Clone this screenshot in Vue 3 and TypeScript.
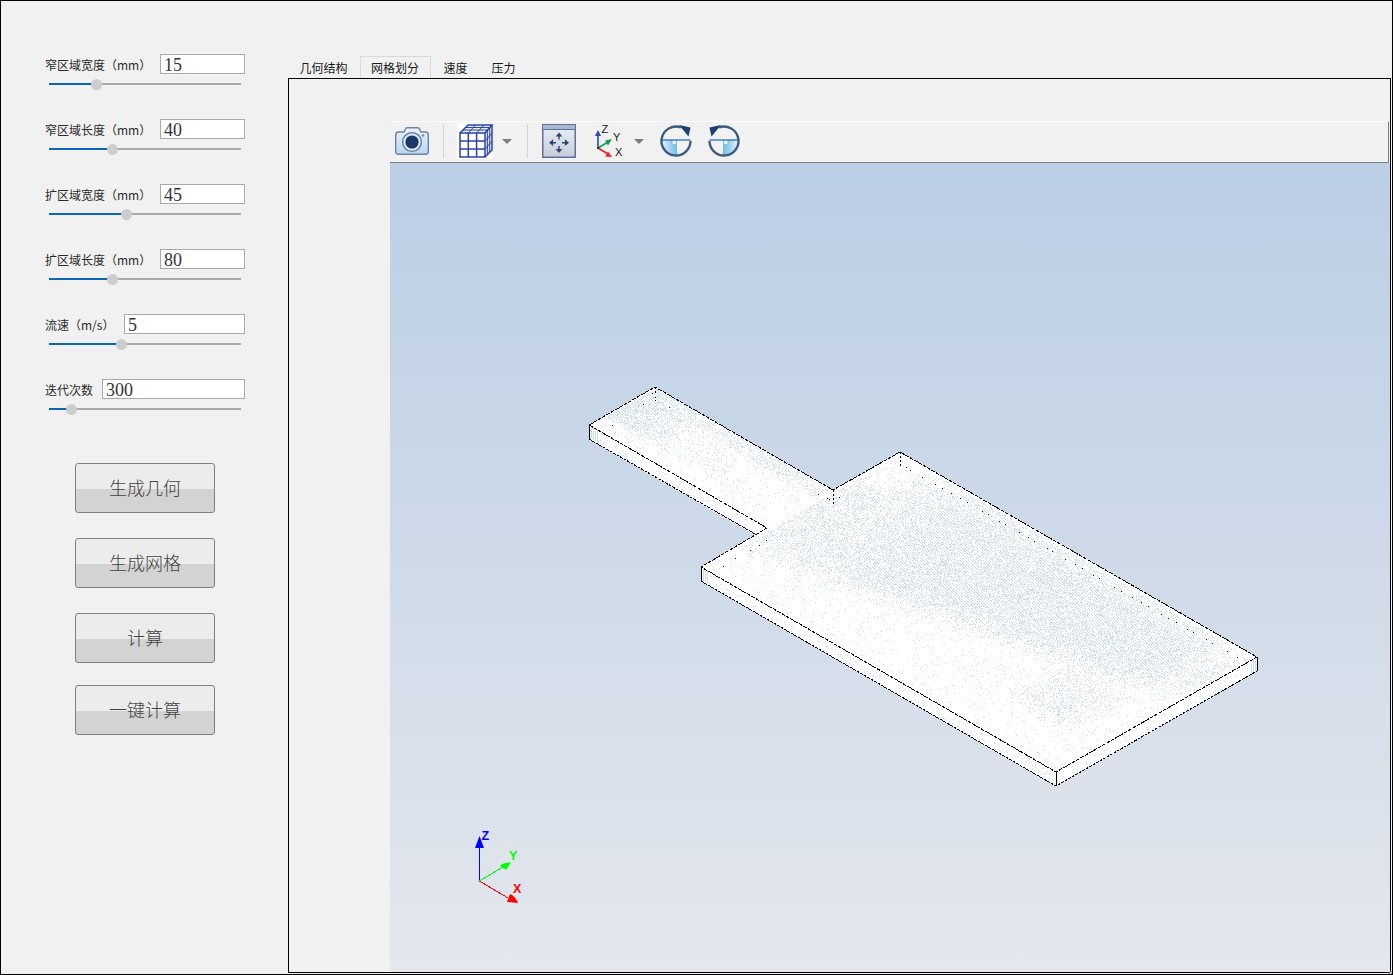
<script setup lang="ts">
interface Param {
  label: string
  value: string
  knob: number
  size: string
}

const params: Param[] = [
  { label: '窄区域宽度（mm）', value: '15', knob: 96, size: 'wide' },
  { label: '窄区域长度（mm）', value: '40', knob: 112, size: 'wide' },
  { label: '扩区域宽度（mm）', value: '45', knob: 126, size: 'wide' },
  { label: '扩区域长度（mm）', value: '80', knob: 112, size: 'wide' },
  { label: '流速（m/s）', value: '5', knob: 121, size: 'mid' },
  { label: '迭代次数', value: '300', knob: 71, size: 'short' },
]
const TRACK_START = 49
const actions = ['生成几何', '生成网格', '计算', '一键计算']
const tabs = ['几何结构', '网格划分', '速度', '压力']

function makeRandom(seed: number): () => number {
  let s = seed
  return () => {
    s = (s + 0x6d2b79f5) | 0
    let t = Math.imul(s ^ (s >>> 15), 1 | s)
    t = (t + Math.imul(t ^ (t >>> 7), 61 | t)) ^ t
    return ((t ^ (t >>> 14)) >>> 0) / 4294967296
  }
}
const rnd = makeRandom(20240607)

type P = [number, number]

function scan(
  o: P,
  a: P,
  b: P,
  density: (u: number, v: number) => number,
  out: string[],
): void {
  const det = a[0] * b[1] - b[0] * a[1]
  const xs = [o[0], o[0] + a[0], o[0] + b[0], o[0] + a[0] + b[0]]
  const ys = [o[1], o[1] + a[1], o[1] + b[1], o[1] + a[1] + b[1]]
  for (let x = Math.min(...xs); x < Math.max(...xs); x++) {
    for (let y = Math.min(...ys); y < Math.max(...ys); y++) {
      const dx = x - o[0]
      const dy = y - o[1]
      const u = (dx * b[1] - b[0] * dy) / det
      const v = (a[0] * dy - dx * a[1]) / det
      if (u <= 0.004 || u >= 0.996 || v <= 0.01 || v >= 0.99) continue
      const ju = u + (rnd() - 0.5) * 0.07
      const jv = v + (rnd() - 0.5) * 0.09
      const hatch = (x + 2 * y) % 3 === 0 ? 2.2 : 0.4
      if (rnd() < density(ju, jv) * hatch) out.push(`M${x} ${y}h1`)
    }
  }
}

function wideDensity(u: number, v: number): number {
  const edge = 0.26 + 0.44 * (u - 0.2)
  if (u < 0.1 && v > 0.78) return 0.05
  if (u > 0.76 && u < 0.9 && v > 0.22 && v <= 0.5) return 0.2
  if (v < edge) return u < 0.2 && v > 0.2 ? 0.06 : 0.025
  let d = 0.36
  if (u < 0.2) d = 0.24
  if (v > 0.92) d *= 0.65
  if (u > 0.9) d *= 0.5
  if (v < edge + 0.08) d *= 0.6
  return d
}

function narrowDensity(u: number, v: number): number {
  if (u < 0.3 && v > 0.25) return 0.4 * (1 - u / 0.4) + 0.06
  if (v > 0.78) return 0.2
  if (u > 0.3 && u < 0.62 && v > 0.25 && v < 0.7) return 0.09
  return 0.025
}

function buildStipple(): string {
  const out: string[] = []
  scan([701, 567], [355, 205], [199, -115], wideDensity, out)
  scan([589, 425], [178, 103], [66, -38], narrowDensity, out)
  scan([701, 567], [355, 205], [0, 14], () => 0.05, out)
  scan([1056, 772], [201, -115], [0, 14], () => 0.05, out)
  scan([589, 425], [166, 96], [0, 14], () => 0.05, out)
  return out.join('')
}

function buildSpecks(): string {
  const out: string[] = []
  for (let i = 0; i < 36; i++) {
    const t = (i + rnd() * 0.7) / 36
    out.push(`M${Math.round(900 + 340 * t)} ${Math.round(464 + 195 * t)}h1`)
  }
  const extra: P[] = [
    [612, 425], [643, 404], [655, 400], [652, 393], [655, 397], [669, 407],
    [818, 494], [827, 498], [829, 499], [839, 497],
    [723, 566], [735, 558], [750, 550], [759, 545], [766, 540],
  ]
  for (const [x, y] of extra) out.push(`M${x} ${y}h1`)
  return out.join('')
}

const stipple = buildStipple()
const specks = buildSpecks()
</script>

<template>
  <div class="window">
    <aside class="controls">
      <div class="params">
        <div v-for="p in params" :key="p.label" class="param">
          <div class="param-row">
            <span class="param-label" :class="p.size">{{ p.label }}</span>
            <input class="param-input" :value="p.value" readonly />
          </div>
          <div class="slider">
            <div class="slider-fill" :style="{ width: p.knob - TRACK_START + 'px' }"></div>
            <div class="slider-knob" :style="{ left: p.knob - TRACK_START + 'px' }"></div>
          </div>
        </div>
      </div>
      <div class="actions">
        <button v-for="a in actions" :key="a" class="action" type="button"><span class="action-text">{{ a }}</span></button>
      </div>
    </aside>

    <main class="workspace">
      <nav class="tabbar">
        <div
          v-for="(t, i) in tabs"
          :key="t"
          class="tab"
          :class="{ first: i === 0, active: i === 1 }"
        >{{ t }}</div>
      </nav>

      <section class="pane">
        <div class="viewer">
          <div class="toolbar">
            <!-- camera -->
            <svg class="ic-camera" width="34" height="28" viewBox="0 0 34 28">
              <defs>
                <linearGradient id="camBody" x1="0" y1="0" x2="0" y2="1">
                  <stop offset="0" stop-color="#eef4fa" />
                  <stop offset="1" stop-color="#bcd6ee" />
                </linearGradient>
              </defs>
              <path
                d="M3.5 5H9L11 1.2Q11.4 .7 12 .7H23Q23.6 .7 24 1.2L26 5H30.5Q33.3 5 33.3 8V24.5Q33.3 27.3 30.5 27.3H3.5Q.7 27.3 .7 24.5V8Q.7 5 3.5 5Z"
                fill="url(#camBody)"
                stroke="#6c84a8"
                stroke-width="1.4"
              />
              <circle cx="17" cy="15" r="9.4" fill="#dbe8f4" stroke="#5f7aa0" stroke-width="1.4" />
              <circle cx="17" cy="15" r="6.6" fill="#1d3767" />
              <circle cx="28" cy="8.5" r="1.2" fill="#6c84a8" />
            </svg>
            <span class="tool-sep sep-a"></span>
            <!-- mesh cube -->
            <svg class="ic-cube" width="36" height="36" viewBox="0 0 36 36">
              <rect width="36" height="36" fill="#fff" />
              <path d="M3 10L11 2H35L28 10Z" fill="#e6f3e0" />
              <path d="M28 10L35 2V27L28 34Z" fill="#e4e9fa" />
              <g fill="none" stroke="#2b41ad" stroke-width="1.5">
                <rect x="3" y="10" width="25" height="24" />
                <path d="M11.3 10V34M19.6 10V34M3 18H28M3 26H28" />
                <path d="M3 10L11 2H35L28 10M35 2V27L28 34" />
                <path d="M11.3 10L18.6 2M19.6 10L27 2M6 7H31M8.6 4.5H33" stroke-width="1" />
                <path d="M30.4 7.5V31.5M32.7 4.8V29M28 18L35 10M28 26L35 18" stroke-width="1" />
              </g>
            </svg>
            <svg class="ic-drop drop-a" width="10" height="5" viewBox="0 0 10 5">
              <path d="M0 0H10L5 5Z" fill="#7d7d7d" />
            </svg>
            <span class="tool-sep sep-b"></span>
            <!-- fit view -->
            <svg class="ic-fit" width="34" height="34" viewBox="0 0 34 34">
              <defs>
                <linearGradient id="fitBody" x1="0" y1="0" x2="0" y2="1">
                  <stop offset="0" stop-color="#eceff4" />
                  <stop offset="1" stop-color="#c6cdd9" />
                </linearGradient>
              </defs>
              <rect x=".75" y=".75" width="32.5" height="32.5" fill="url(#fitBody)" stroke="#5b7299" stroke-width="1.5" />
              <rect x="1" y="1" width="32" height="4" fill="#a9b8cf" />
              <path d="M1 5.5H33" stroke="#5b7299" stroke-width="1" />
              <g fill="none" stroke="#2a4778" stroke-width="1.4">
                <path d="M17 11.5V15.5M17 22V26M10 18.7H14M20 18.7H24" />
              </g>
              <g fill="#2a4778">
                <path d="M17 8.5L20.4 12.6H13.6Z" />
                <path d="M17 29L20.4 24.9H13.6Z" />
                <path d="M7 18.7L11.1 15.3V22.1Z" />
                <path d="M27 18.7L22.9 15.3V22.1Z" />
              </g>
            </svg>
            <!-- axes -->
            <svg class="ic-axes" width="30" height="36" viewBox="0 0 30 36">
              <path d="M3 25V11" stroke="#2a4bb0" stroke-width="1.6" />
              <path d="M3 7L6 13H0Z" fill="#2a4bb0" />
              <path d="M3 25L13 19" stroke="#159a4a" stroke-width="1.6" />
              <path d="M17 16L13 22.5L10.2 17.6Z" fill="#159a4a" />
              <path d="M3 25L13 31" stroke="#e02626" stroke-width="1.6" />
              <path d="M17 34L10.2 33.4L13 28.4Z" fill="#e02626" />
              <circle cx="3" cy="25" r="1.1" fill="#222" />
              <text x="6.5" y="9.5" class="axis-mini">Z</text>
              <text x="18" y="18" class="axis-mini">Y</text>
              <text x="20" y="33" class="axis-mini">X</text>
            </svg>
            <svg class="ic-drop drop-b" width="10" height="5" viewBox="0 0 10 5">
              <path d="M0 0H10L5 5Z" fill="#7d7d7d" />
            </svg>
            <!-- rotate cw -->
            <svg class="ic-rot rot-a" width="32" height="32" viewBox="0 0 32 32">
              <defs>
                <linearGradient id="rotFill" x1="0" y1="0" x2="1" y2="0">
                  <stop offset="0" stop-color="#e6f4fb" />
                  <stop offset="1" stop-color="#6fbce8" />
                </linearGradient>
              </defs>
              <path d="M1.5 15H17V30.5A15.5 15.5 0 0 1 1.5 15Z" fill="url(#rotFill)" />
              <path d="M12 15V19.5H16.5V15" fill="#dff0fa" stroke="#7fb4d8" stroke-width=".8" />
              <path d="M1.5 15H30.5" stroke="#2a72b5" stroke-width="1.3" />
              <path d="M30.5 16A14.5 14.5 0 1 1 21 2.4" fill="none" stroke="#3c5a80" stroke-width="2.4" />
              <path d="M19 0L30.5 2.5L28.5 11.5Z" fill="#1f3f6e" />
            </svg>
            <!-- rotate ccw -->
            <svg class="ic-rot rot-b" width="32" height="32" viewBox="0 0 32 32">
              <g transform="translate(32 0) scale(-1 1)">
                <path d="M1.5 15H17V30.5A15.5 15.5 0 0 1 1.5 15Z" fill="url(#rotFill)" />
                <path d="M12 15V19.5H16.5V15" fill="#dff0fa" stroke="#7fb4d8" stroke-width=".8" />
                <path d="M1.5 15H30.5" stroke="#2a72b5" stroke-width="1.3" />
                <path d="M30.5 16A14.5 14.5 0 1 1 21 2.4" fill="none" stroke="#3c5a80" stroke-width="2.4" />
                <path d="M19 0L30.5 2.5L28.5 11.5Z" fill="#1f3f6e" />
              </g>
            </svg>
          </div>

          <div class="viewport">
            <svg class="scene" width="1000" height="809" viewBox="390 163 1000 809">
              <!-- faces -->
              <path
                d="M589 425L655 387L833 490L900 452L1257 657L1257 671L1056 786L701 581L701 567L755 535L589 439Z"
                fill="#fff"
              />
              <path :d="stipple" stroke="#cfdcea" stroke-width="1" fill="none" shape-rendering="crispEdges" transform="translate(0 .5)" />
              <path
                d="M591 427V439M593 428V440M595 429V441M597 430V442M703 568V581M705 569V582M707 570V583M1255 658V671M1253 659V672M1251 660V673"
                stroke="#cfdcea"
                stroke-width="1"
                shape-rendering="crispEdges"
              />
              <!-- wireframe -->
              <g fill="none" stroke="#000" stroke-width="1" shape-rendering="crispEdges">
                <path stroke-dasharray="4 1" d="M589 425L655 387L833 490L900 452L1257 657L1056 772L701 567L767 528L589 425" />
                <path stroke-dasharray="3 1" d="M589 439L755 534M701 581L1056 786L1257 671" />
                <path d="M589.5 425V439M701.5 567V581M1056.5 772V786M1257.5 657V671" />
                <path stroke-dasharray="2 2" d="M833.5 490V504M900.5 452V466M655.5 387V393" />
              </g>
              <path :d="specks" stroke="#000" stroke-width="1" fill="none" shape-rendering="crispEdges" transform="translate(0 .5)" />

              <!-- orientation triad -->
              <g shape-rendering="crispEdges">
                <path d="M479.5 881V846" stroke="#0000ff" stroke-width="1" />
                <path d="M479.5 881L503 867" stroke="#00ff00" stroke-width="1" />
                <path d="M479.5 881L508 898" stroke="#ff0000" stroke-width="1" />
              </g>
              <path d="M479.5 836L484 848H475Z" fill="#0000ff" />
              <path d="M511 862.5L506 870L500 866Q503 862 511 862.5Z" fill="#00ff00" />
              <path d="M518 903L507 902L510 894Q515 896 518 903Z" fill="#ff0000" />
              <text x="481.5" y="840" class="axis-big" fill="#0000ff">Z</text>
              <text x="509" y="860" class="axis-big" fill="#00ff00">Y</text>
              <text x="513" y="893" class="axis-big" fill="#ff0000">X</text>
            </svg>
          </div>
        </div>
      </section>
    </main>
  </div>
</template>

<style scoped>
.window {
  position: relative;
  box-sizing: border-box;
  width: 1393px;
  height: 975px;
  border: 1px solid #000;
  background: #f1f1f1;
  display: flex;
  overflow: hidden;
  font-family: "Noto Sans CJK SC", "Liberation Sans", sans-serif;
  color: #222;
}
.window::after {
  content: "";
  position: absolute;
  right: 0;
  bottom: 0;
  border-style: solid;
  border-width: 0 0 4px 4px;
  border-color: transparent transparent #b5b5b5 transparent;
}

.controls {
  width: 287px;
  flex: none;
  box-sizing: border-box;
  padding: 53px 0 0 44px;
  display: flex;
  flex-direction: column;
}
.params {
  display: flex;
  flex-direction: column;
  gap: 29px;
}
.param {
  width: 200px;
  display: flex;
  flex-direction: column;
  gap: 5px;
}
.param-row {
  display: flex;
  align-items: center;
  height: 20px;
}
.param-label {
  flex: none;
  font-size: 12px;
  line-height: 20px;
  padding-top: 2px;
  white-space: nowrap;
  color: #2b2b2b;
}
.param-label.wide { width: 115px; }
.param-label.mid { width: 79px; }
.param-label.short { width: 57px; }
.param-input {
  flex: 1;
  min-width: 0;
  box-sizing: border-box;
  height: 20px;
  border: 1px solid #a9a9a9;
  border-radius: 0;
  outline: none;
  padding: 3px 3px 0;
  background: #fff;
  font-family: "Liberation Serif", serif;
  font-size: 18px;
  line-height: 16px;
  color: #333;
}
.slider {
  position: relative;
  width: 192px;
  height: 2px;
  margin: 4px 0 5px 4px;
  background: #a9a9a9;
}
.slider-fill {
  height: 100%;
  background: #0b66b8;
}
.slider-knob {
  position: absolute;
  top: -4px;
  width: 11px;
  height: 11px;
  margin-left: -5.5px;
  border-radius: 50%;
  background: #cdcdcd;
}

.actions {
  margin: 48px 0 0 30px;
  display: flex;
  flex-direction: column;
}
.action {
  box-sizing: border-box;
  width: 140px;
  height: 50px;
  padding: 0;
  margin-bottom: 25px;
  border: 1px solid #808080;
  border-radius: 3px;
  background: linear-gradient(#ececec 0, #ececec 52%, #d3d3d3 52%, #d3d3d3 100%);
  font-family: "Noto Sans CJK SC", sans-serif;
  font-size: 18px;
  font-weight: 300;
  color: #444;
}
.action-text {
  display: block;
  margin-top: -2px;
}
.action:nth-child(3) {
  margin-bottom: 22px;
}

.workspace {
  flex: 1;
  min-width: 0;
  display: flex;
  flex-direction: column;
}
.tabbar {
  height: 77px;
  flex: none;
  box-sizing: border-box;
  padding-top: 55px;
  display: flex;
  font-size: 12px;
}
.tab {
  box-sizing: border-box;
  height: 22px;
  width: 48px;
  line-height: 24px;
  text-align: center;
  color: #1a1a1a;
  white-space: nowrap;
  padding-left: 1px;
}
.tab.first {
  width: 72px;
  padding-left: 11px;
  padding-right: 12px;
}
.tab.active {
  width: 71px;
  padding: 0 1px 0 0;
  border: 1px solid #d9d9d9;
  border-bottom: none;
  background: #f1f1f1;
  line-height: 22px;
}
.pane {
  flex: 1;
  min-height: 0;
  box-sizing: border-box;
  margin: 0 1px 1px 0;
  border: 1px solid #000;
  padding: 42px 0 0 101px;
  display: flex;
}
.viewer {
  flex: 1;
  min-width: 0;
  display: flex;
  flex-direction: column;
}
.toolbar {
  flex: none;
  box-sizing: border-box;
  height: 42px;
  padding: 0 0 2px 5px;
  margin-right: 1px;
  display: flex;
  align-items: center;
  background: #f1f1f1;
  border-top: 1px solid #fff;
  border-bottom: 1px solid #808080;
  border-right: 1px solid #808080;
}
.toolbar svg {
  flex: none;
  display: block;
  overflow: visible;
}
.tool-sep {
  flex: none;
  width: 1px;
  height: 34px;
  background: #d4d4d4;
}
.sep-a { margin-left: 14px; }
.ic-cube { margin-left: 13px; }
.drop-a { margin-left: 9px; }
.sep-b { margin-left: 15px; }
.ic-fit { margin-left: 14px; }
.ic-axes { margin-left: 19px; }
.drop-b { margin-left: 9px; }
.rot-a { margin-left: 16px; }
.rot-b { margin-left: 16px; }
.axis-mini {
  font-family: "Liberation Sans", sans-serif;
  font-size: 11px;
  fill: #1a1a1a;
}
.viewport {
  flex: 1;
  min-height: 0;
  position: relative;
  overflow: hidden;
  background: linear-gradient(#bacee4, #e4e7ed);
}
.scene {
  position: absolute;
  left: 0;
  top: 0;
  display: block;
}
.axis-big {
  font-family: "Liberation Sans", sans-serif;
  font-size: 12.5px;
  font-weight: 700;
}
</style>
